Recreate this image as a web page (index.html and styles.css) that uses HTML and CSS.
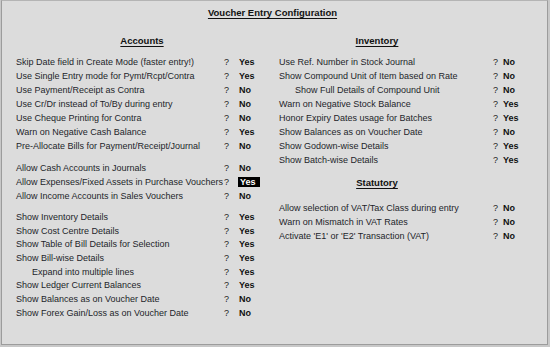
FILE: index.html
```html
<!DOCTYPE html>
<html lang="en">
<head>
    <meta charset="UTF-8">
    <title>Voucher Entry Configuration</title>
    <link rel="stylesheet" href="styles.css">
</head>
<body>
    <div class="screen">
        <h1 class="title"><span>Voucher Entry Configuration</span></h1>

        <div class="columns">
            <div class="col col-left">
                <h2 class="section"><span>Accounts</span></h2>

                <div class="group">
                    <div class="row"><span class="label">Skip Date field in Create Mode (faster entry!)</span><span class="q">?</span><span class="val">Yes</span></div>
                    <div class="row"><span class="label">Use Single Entry mode for Pymt/Rcpt/Contra</span><span class="q">?</span><span class="val">Yes</span></div>
                    <div class="row"><span class="label">Use Payment/Receipt as Contra</span><span class="q">?</span><span class="val">No</span></div>
                    <div class="row"><span class="label">Use Cr/Dr instead of To/By during entry</span><span class="q">?</span><span class="val">No</span></div>
                    <div class="row"><span class="label">Use Cheque Printing for Contra</span><span class="q">?</span><span class="val">No</span></div>
                    <div class="row"><span class="label">Warn on Negative Cash Balance</span><span class="q">?</span><span class="val">Yes</span></div>
                    <div class="row"><span class="label">Pre-Allocate Bills for Payment/Receipt/Journal</span><span class="q">?</span><span class="val">No</span></div>
                </div>

                <div class="group">
                    <div class="row"><span class="label">Allow Cash Accounts in Journals</span><span class="q">?</span><span class="val">No</span></div>
                    <div class="row"><span class="label">Allow Expenses/Fixed Assets in Purchase Vouchers</span><span class="q">?</span><span class="val active">Yes</span></div>
                    <div class="row"><span class="label">Allow Income Accounts in Sales Vouchers</span><span class="q">?</span><span class="val">No</span></div>
                </div>

                <div class="group group-last">
                    <div class="row"><span class="label">Show Inventory Details</span><span class="q">?</span><span class="val">Yes</span></div>
                    <div class="row"><span class="label">Show Cost Centre Details</span><span class="q">?</span><span class="val">Yes</span></div>
                    <div class="row"><span class="label">Show Table of Bill Details for Selection</span><span class="q">?</span><span class="val">Yes</span></div>
                    <div class="row"><span class="label">Show Bill-wise Details</span><span class="q">?</span><span class="val">Yes</span></div>
                    <div class="row"><span class="label sub">Expand into multiple lines</span><span class="q">?</span><span class="val">Yes</span></div>
                    <div class="row"><span class="label">Show Ledger Current Balances</span><span class="q">?</span><span class="val">Yes</span></div>
                    <div class="row"><span class="label">Show Balances as on Voucher Date</span><span class="q">?</span><span class="val">No</span></div>
                    <div class="row"><span class="label">Show Forex Gain/Loss as on Voucher Date</span><span class="q">?</span><span class="val">No</span></div>
                </div>
            </div>

            <div class="col col-right">
                <h2 class="section"><span>Inventory</span></h2>

                <div class="group">
                    <div class="row"><span class="label">Use Ref. Number in Stock Journal</span><span class="q">?</span><span class="val">No</span></div>
                    <div class="row"><span class="label">Show Compound Unit of Item based on Rate</span><span class="q">?</span><span class="val">No</span></div>
                    <div class="row"><span class="label sub">Show Full Details of Compound Unit</span><span class="q">?</span><span class="val">No</span></div>
                    <div class="row"><span class="label">Warn on Negative Stock Balance</span><span class="q">?</span><span class="val">Yes</span></div>
                    <div class="row"><span class="label">Honor Expiry Dates usage for Batches</span><span class="q">?</span><span class="val">Yes</span></div>
                    <div class="row"><span class="label">Show Balances as on Voucher Date</span><span class="q">?</span><span class="val">No</span></div>
                    <div class="row"><span class="label">Show Godown-wise Details</span><span class="q">?</span><span class="val">Yes</span></div>
                    <div class="row"><span class="label">Show Batch-wise Details</span><span class="q">?</span><span class="val">Yes</span></div>
                </div>

                <h2 class="section section-stat"><span>Statutory</span></h2>

                <div class="group">
                    <div class="row"><span class="label">Allow selection of VAT/Tax Class during entry</span><span class="q">?</span><span class="val">No</span></div>
                    <div class="row"><span class="label">Warn on Mismatch in VAT Rates</span><span class="q">?</span><span class="val">No</span></div>
                    <div class="row"><span class="label">Activate 'E1' or 'E2' Transaction (VAT)</span><span class="q">?</span><span class="val">No</span></div>
                </div>
            </div>
        </div>
    </div>
</body>
</html>
```

FILE: styles.css
```css
* {
    margin: 0;
    padding: 0;
    box-sizing: border-box;
}

body {
    font-family: "Liberation Sans", Arial, sans-serif;
    font-size: 9px;
    color: #231f2a;
    background: #c8c8c8;
    width: 550px;
    height: 347px;
    overflow: hidden;
}

.screen {
    width: 547px;
    height: 345px;
    margin-left: 1px;
    background: #dcdcdc;
    border: 1px solid #9c9c9c;
    border-top-color: #b4b4b4;
    padding-top: 5px;
}

.title {
    text-align: center;
    font-size: 9.5px;
    font-weight: bold;
    color: #111;
    height: 15px;
    line-height: 13px;
    margin-left: -4px;
}

.title span {
    text-decoration: underline;
    text-underline-offset: 2px;
}

.columns {
    display: flex;
    padding-left: 14px;
    margin-top: 13px;
}

.col-left {
    width: 263px;
}

.col-right {
    width: 260px;
}

.section {
    font-size: 9.5px;
    font-weight: bold;
    color: #111;
    height: 14px;
    line-height: 14px;
    margin-bottom: 7px;
}

.section span {
    text-decoration: underline;
    text-underline-offset: 2px;
}

.col-left .section {
    text-align: center;
    width: 252px;
}

.col-right .section {
    text-align: center;
    width: 196px;
}

.section-stat {
    margin-top: 9px;
    margin-bottom: 11px;
}

.group {
    margin-bottom: 8px;
}

.row {
    display: flex;
    height: 14px;
    line-height: 14px;
    white-space: nowrap;
}

.group-last .row {
    height: 13.7px;
    line-height: 13.7px;
}

.label {
    width: 208px;
}

.col-right .label {
    width: 214px;
}

.label.sub {
    padding-left: 16px;
}

.q {
    width: 14px;
    color: #222;
}

.col-right .q {
    width: 9px;
}

.val {
    font-weight: bold;
    color: #111;
    padding-left: 1px;
}

.val.active {
    background: #000;
    color: #fff;
    width: 22px;
    line-height: 11px;
    height: 10px;
    margin-top: 2px;
    padding-left: 2px;
}
```
